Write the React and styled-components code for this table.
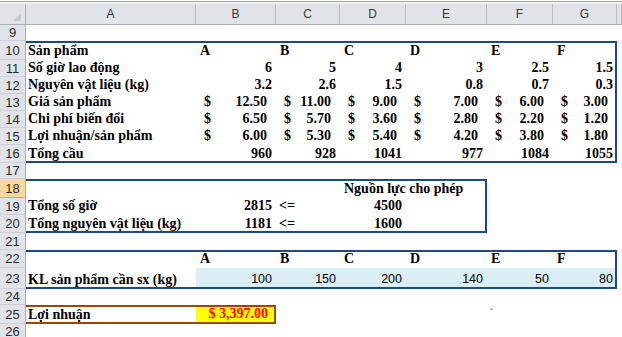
import styled, { createGlobalStyle } from "styled-components"

const COLS = "26px 170px 80px 64px 66px 81px 66px 64px 1fr"
const BLUE = "#1f497d"
const BROWN = "#984807"

const GlobalStyle = createGlobalStyle`
  body {
    margin: 0;
    background: #fff;
  }
`

const Sheet = styled.div`
  width: 622px;
  height: 337px;
  overflow: hidden;
  background: #fff;
`

const Strip = styled.div`
  height: 4px;
  background: linear-gradient(#fff 0 1px, #a3a8ae 1px 2px, #eef0f2 2px);
`

const Row = styled.div`
  display: grid;
  grid-template-columns: ${COLS};
  height: ${p => p.$h}px;
`

const Corner = styled.div`
  background: #e0e3e7;
  border-right: 1px solid #a9aeb5;
  border-bottom: 1px solid #a9aeb5;
  display: flex;
  align-items: flex-end;
  justify-content: flex-end;
  padding: 0 4px 3px 0;
  svg { display: block; }
`

const ColHead = styled.div`
  background: #e0e3e7;
  border-right: 1px solid #b8bdc3;
  border-bottom: 1px solid #a9aeb5;
  display: flex;
  align-items: center;
  justify-content: center;
  font-family: "Liberation Sans", Arial, sans-serif;
  font-size: 12px;
  color: #3a3a3a;
`

const RowHead = styled.div`
  background: ${p => (p.$active ? "#f9d99b" : "#e0e3e7")};
  border-right: 1px solid ${p => (p.$active ? "#e3a640" : "#a9aeb5")};
  border-bottom: 1px solid ${p => (p.$active ? "#e3a640" : "#ccd0d5")};
  box-sizing: border-box;
  display: flex;
  align-items: center;
  justify-content: center;
  font-family: "Liberation Sans", Arial, sans-serif;
  font-size: 13px;
  color: #2b2b2b;
`

const Cell = styled.div`
  display: flex;
  align-items: flex-end;
  justify-content: ${p => p.$justify || "flex-start"};
  padding: ${p => p.$pad || "0 4px 1px 4px"};
  box-sizing: border-box;
  min-width: 0;
  white-space: nowrap;
  overflow: visible;
  line-height: 16px;
  font-family: ${p => (p.$sans ? `"Liberation Sans", Arial, sans-serif` : `"Liberation Serif", "Times New Roman", serif`)};
  font-size: ${p => (p.$sans ? "12.5px" : "14px")};
  font-weight: ${p => (p.$sans ? 400 : 700)};
  color: ${p => p.$color || "#000"};
  background: ${p => p.$fill || "transparent"};
  box-shadow: ${p => p.$edges || "none"};
`

const Tick = styled.span`
  font-size: 9px;
  color: #5a2d6e;
  align-self: flex-start;
  line-height: 10px;
  margin-top: 2px;
`

const letters = ["A", "B", "C", "D", "E", "F"]

const label = v => ({ k: "label", v })
const head = v => ({ k: "head", v })
const num = v => ({ k: "num", v })
const money = v => ({ k: "money", v })
const plain = v => ({ k: "plain", v })
const op = v => ({ k: "op", v })

const rows = [
  { n: 9, h: 16, cells: [] },
  { n: 10, h: 19, cells: [label("Sản phẩm"), ...letters.map(head)] },
  { n: 11, h: 17, cells: [label("Số giờ lao động"), ...["6", "5", "4", "3", "2.5", "1.5"].map(num)] },
  { n: 12, h: 17, cells: [label("Nguyên vật liệu (kg)"), ...["3.2", "2.6", "1.5", "0.8", "0.7", "0.3"].map(num)] },
  { n: 13, h: 17, cells: [label("Giá sản phẩm"), ...["12.50", "11.00", "9.00", "7.00", "6.00", "3.00"].map(money)] },
  { n: 14, h: 17, cells: [label("Chi phí biến đổi"), ...["6.50", "5.70", "3.60", "2.80", "2.20", "1.20"].map(money)] },
  { n: 15, h: 17, cells: [label("Lợi nhuận/sản phẩm"), ...["6.00", "5.30", "5.40", "4.20", "3.80", "1.80"].map(money)] },
  { n: 16, h: 18, cells: [label("Tổng cầu"), ...["960", "928", "1041", "977", "1084", "1055"].map(num)] },
  { n: 17, h: 16, cells: [] },
  { n: 18, h: 19, active: true, cells: [null, null, null, head("Nguồn lực cho phép")] },
  { n: 19, h: 17, cells: [label("Tổng số giờ"), num("2815"), op("<="), num("4500")] },
  { n: 20, h: 18, cells: [label("Tổng nguyên vật liệu (kg)"), num("1181"), op("<="), num("1600")] },
  { n: 21, h: 17, cells: [] },
  { n: 22, h: 18, cells: [null, ...letters.map(head)] },
  { n: 23, h: 21, cells: [label("KL sản phẩm cần sx (kg)"), ...["100", "150", "200", "140", "50", "80"].map(plain)] },
  { n: 24, h: 16, cells: [] },
  { n: 25, h: 19, cells: [label("Lợi nhuận"), { k: "result", v: "$ 3,397.00" }, null, null, null, { k: "tick" }] },
  { n: 26, h: 13, cells: [] },
]

const boxes = [
  { r0: 10, r1: 16, c1: 6, color: BLUE },
  { r0: 18, r1: 20, c1: 4, color: BLUE },
  { r0: 22, r1: 23, c1: 6, color: BLUE },
  { r0: 25, r1: 25, c1: 1, color: BROWN },
]

const edgesFor = (n, c) => {
  const box = boxes.find(b => n >= b.r0 && n <= b.r1 && c <= b.c1)
  if (!box) return null
  const list = []
  if (n === box.r0) list.push(`inset 0 2px 0 ${box.color}`)
  if (n === box.r1) list.push(`inset 0 -2px 0 ${box.color}`)
  if (c === box.c1) list.push(`inset -2px 0 0 ${box.color}`)
  return list.length ? list.join(", ") : null
}

const renderCell = (spec, n, c) => {
  const edges = edgesFor(n, c)
  const key = `${n}-${c}`
  if (!spec) return <Cell key={key} $edges={edges} />
  switch (spec.k) {
    case "label":
      return <Cell key={key} $edges={edges} $pad="0 0 1px 2px">{spec.v}</Cell>
    case "head":
      return <Cell key={key} $edges={edges}>{spec.v}</Cell>
    case "num":
      return <Cell key={key} $edges={edges} $justify="flex-end">{spec.v}</Cell>
    case "money":
      return (
        <Cell key={key} $edges={edges} $justify="space-between" $pad="0 9px 1px 8px">
          <span>$</span>
          <span>{spec.v}</span>
        </Cell>
      )
    case "plain":
      return <Cell key={key} $edges={edges} $sans $fill="#daeef3" $justify="flex-end" $pad="0 4px 2px 4px">{spec.v}</Cell>
    case "op":
      return <Cell key={key} $edges={edges} $pad="0 4px 1px 3px">{spec.v}</Cell>
    case "result":
      return <Cell key={key} $edges={edges} $fill="#ffff00" $color="#ff0000" $justify="flex-end" $pad="0 8px 2px 4px">{spec.v}</Cell>
    case "tick":
      return <Cell key={key} $edges={edges} $pad="0 0 0 3px"><Tick>`</Tick></Cell>
    default:
      return <Cell key={key} $edges={edges} />
  }
}

const App = () => {
  return (
    <Sheet>
      <GlobalStyle />
      <Strip />
      <Row $h={21}>
        <Corner>
          <svg width="8" height="8" viewBox="0 0 8 8">
            <polygon points="8,0 8,8 0,8" fill="#c3c8ce" />
          </svg>
        </Corner>
        {["A", "B", "C", "D", "E", "F", "G", ""].map((l, i) => (
          <ColHead key={i}>{l}</ColHead>
        ))}
      </Row>
      {rows.map(r => (
        <Row key={r.n} $h={r.h}>
          <RowHead $active={r.active}>{r.n}</RowHead>
          {Array.from({ length: 8 }, (_, c) => renderCell(r.cells[c], r.n, c))}
        </Row>
      ))}
    </Sheet>
  )
}

export default App
